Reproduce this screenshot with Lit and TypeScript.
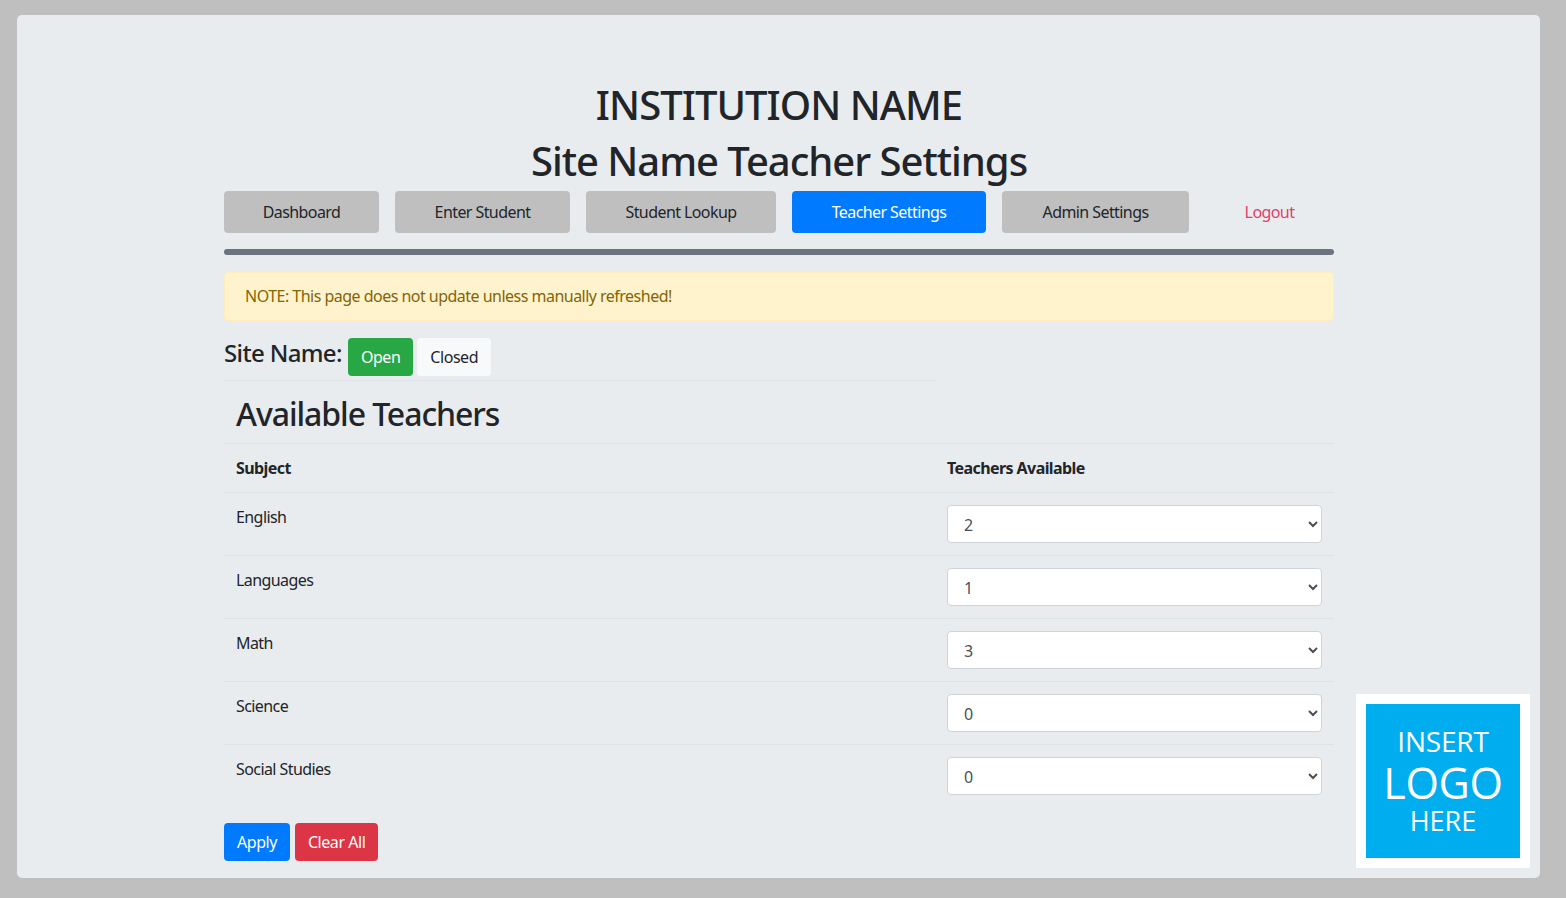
import { LitElement, html, css } from 'lit'
import { customElement, state } from 'lit/decorators.js'

const NAV = ['Dashboard', 'Enter Student', 'Student Lookup', 'Teacher Settings', 'Admin Settings']
const SUBJECTS = [
  { name: 'English', count: 2 },
  { name: 'Languages', count: 1 },
  { name: 'Math', count: 3 },
  { name: 'Science', count: 0 },
  { name: 'Social Studies', count: 0 },
]

@customElement('app-root')
export class AppRoot extends LitElement {
  static styles = css`
    :host {
      display: block;
      height: 898px;
      box-sizing: border-box;
      padding: 15px 26px 20px 17px;
      background: #bfbfbf;
      font-family: 'Noto Sans', 'Open Sans', sans-serif;
      font-size: 16px;
      line-height: 24px;
      letter-spacing: -0.58px;
      color: #212529;
      overflow: hidden;
    }

    * {
      box-sizing: border-box;
    }

    .jumbotron {
      position: relative;
      height: 863px;
      padding-top: 66px;
      background: #e9ecef;
      border-radius: 5px;
    }

    .container {
      width: 1110px;
      margin-left: 207px;
    }

    h1 {
      margin: 0 0 8px;
      font-size: 40px;
      font-weight: 500;
      line-height: 48px;
      letter-spacing: -0.95px;
      text-align: center;
    }

    h1.sub {
      margin-bottom: 6px;
      letter-spacing: -1.03px;
    }

    .nav {
      display: grid;
      grid-template-columns: 155px 175px 190px 194px 187px 1fr;
      gap: 16px;
    }

    .nav a {
      display: block;
      height: 42px;
      line-height: 42px;
      text-align: center;
      border-radius: 4px;
      background: #bfbfbf;
      color: #212529;
    }

    .nav a.active {
      background: #007bff;
      color: #fff;
    }

    .nav a.logout {
      background: none;
      color: #e0406a;
    }

    .rule {
      height: 6px;
      margin: 16px 0 17px;
      border: 0;
      border-radius: 3px;
      background: #6c757d;
    }

    .alert {
      height: 49px;
      padding: 11px 20px;
      background: #fff3cd;
      border: 1px solid #ffeeba;
      border-radius: 4px;
      color: #856404;
      letter-spacing: -0.52px;
    }

    .site {
      display: flex;
      gap: 4px;
      height: 60px;
      width: 712px;
      padding-top: 17px;
      border-bottom: 1px solid #dee2e6;
    }

    .site h4 {
      margin: 0 2px 0 0;
      font-size: 24px;
      font-weight: 500;
      line-height: 29px;
      letter-spacing: -0.64px;
    }

    .btn {
      height: 38px;
      padding: 0 13px;
      border: 0;
      border-radius: 4px;
      font: inherit;
      letter-spacing: -0.45px;
      line-height: 38px;
      color: #fff;
    }

    .btn.open {
      background: #28a745;
    }

    .btn.closed {
      background: #f8f9fa;
      color: #212529;
    }

    .btn.apply {
      background: #007bff;
    }

    .btn.clear {
      background: #dc3545;
    }

    h2 {
      margin: 0;
      height: 62px;
      padding: 14px 12px 0;
      font-size: 32px;
      font-weight: 500;
      line-height: 38px;
      letter-spacing: -1.07px;
    }

    table {
      width: 100%;
      border-collapse: collapse;
      table-layout: fixed;
    }

    th, td {
      padding: 12px;
      border-top: 1px solid #dee2e6;
      text-align: left;
      vertical-align: top;
    }

    th {
      font-weight: 700;
    }

    .col-subject {
      width: 711px;
    }

    select {
      display: block;
      width: 100%;
      height: 38px;
      padding: 7px 12px 5px;
      background: #fff;
      border: 1px solid #ced4da;
      border-radius: 4px;
      font: inherit;
      letter-spacing: inherit;
      color: #495057;
    }

    .actions {
      display: flex;
      gap: 5px;
      margin-top: 16px;
    }

    .logo {
      position: absolute;
      right: 10px;
      bottom: 10px;
      width: 174px;
      height: 174px;
      padding: 10px;
      background: #fff;
    }

    .logo div {
      display: flex;
      flex-direction: column;
      align-items: center;
      justify-content: center;
      height: 100%;
      padding-bottom: 4px;
      background: #00aeef;
      color: #fff;
      font-family: 'Open Sans', sans-serif;
      font-size: 28px;
      line-height: 38px;
      letter-spacing: -0.2px;
      text-transform: uppercase;
    }

    .logo .big {
      font-size: 43px;
      line-height: 46px;
      letter-spacing: -0.3px;
    }

    .logo .small {
      font-size: 27px;
      line-height: 30px;
      letter-spacing: 0;
    }
  `

  @state() private subjects = SUBJECTS

  render() {
    return html`
      <div class="jumbotron">
        <div class="container">
          <h1>INSTITUTION NAME</h1>
          <h1 class="sub">Site Name Teacher Settings</h1>
          <nav class="nav">
            ${NAV.map((n) => html`<a class=${n === 'Teacher Settings' ? 'active' : ''}>${n}</a>`)}
            <a class="logout">Logout</a>
          </nav>
          <hr class="rule" />
          <div class="alert">NOTE: This page does not update unless manually refreshed!</div>
          <div class="site">
            <h4>Site Name:</h4>
            <button class="btn open">Open</button>
            <button class="btn closed">Closed</button>
          </div>
          <h2>Available Teachers</h2>
          <table>
            <thead>
              <tr><th class="col-subject">Subject</th><th>Teachers Available</th></tr>
            </thead>
            <tbody>
              ${this.subjects.map((s) => html`
                <tr>
                  <td>${s.name}</td>
                  <td>
                    <select .value=${String(s.count)}>
                      ${[0, 1, 2, 3, 4, 5].map((v) => html`<option ?selected=${v === s.count}>${v}</option>`)}
                    </select>
                  </td>
                </tr>
              `)}
            </tbody>
          </table>
          <div class="actions">
            <button class="btn apply">Apply</button>
            <button class="btn clear">Clear All</button>
          </div>
        </div>
        <div class="logo">
          <div>
            <span>Insert</span>
            <span class="big">Logo</span>
            <span class="small">Here</span>
          </div>
        </div>
      </div>
    `
  }
}
